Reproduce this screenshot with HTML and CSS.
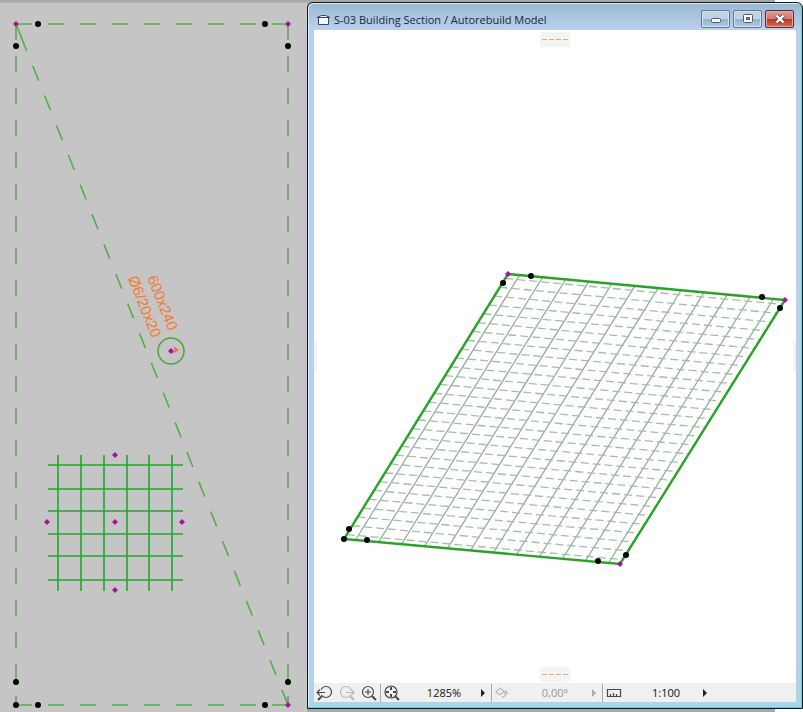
FILE: index.html
```html
<!DOCTYPE html>
<html lang="en">
<head>
<meta charset="utf-8">
<title>S-03 Building Section</title>
<link rel="stylesheet" href="styles.css">
</head>
<body>
<main class="workspace">
  <section class="plan" aria-label="Floor plan">
    <svg class="drawing" viewBox="0 0 307 709" preserveAspectRatio="xMinYMin meet">
      <g id="outline" class="outline"></g>
      <g id="swatch" class="swatch"></g>
      <circle class="ring" cx="171" cy="348" r="13"/>
      <path class="pointer" d="M173 343L179 347L172 351L175 347Z"/>
      <g class="label" transform="translate(147 275) rotate(68)">
        <text x="0" y="0">600x240</text>
        <text x="-7" y="18">Ø6/20x20</text>
      </g>
      <g id="plan-marks"></g>
    </svg>
  </section>
  <section class="window" aria-label="Section window">
    <header class="titlebar">
      <svg class="title-icon" viewBox="0 0 15 13"><path d="M2.500 4.500V11.500H12.500V4.500M1 4.500H14L9.500 2.500H5.500L1 4.500" fill="#f4f8fc" stroke="#34475e"/></svg>
      <h1 class="title">S-03 Building Section / Autorebuild Model</h1>
      <button class="winbtn" aria-label="Minimize"><svg viewBox="0 0 14 12"><rect x="2.500" y="5.500" width="9" height="4" rx="1" fill="#fff" stroke="#4c5b6c"/></svg></button>
      <button class="winbtn" aria-label="Maximize"><svg viewBox="0 0 14 12"><rect x="2.500" y="1.500" width="9" height="8" rx="1" fill="#fff" stroke="#4c5b6c"/><rect x="5.500" y="4.500" width="3" height="2" fill="#89a5c1" stroke="#4c5b6c"/></svg></button>
      <button class="winbtn close" aria-label="Close"><svg viewBox="0 0 14 12"><path d="M3.500 2.500L10.500 9.500M10.500 2.500L3.500 9.500" stroke="#6a4543" stroke-width="4"/><path d="M3.500 2.500L10.500 9.500M10.500 2.500L3.500 9.500" stroke="#fff" stroke-width="2.400"/></svg></button>
    </header>
    <div class="view">
      <svg class="model" viewBox="314 30 482 653" preserveAspectRatio="xMidYMid meet">
        <g id="mesh"></g>
        <path class="mesh-edge" d="M508 274L785 300L620 564L344 539Z"/>
        <g id="model-marks"></g>
      </svg>
      <span class="hint top"><i></i><i></i><i></i><i></i></span>
      <span class="hint bottom"><i></i><i></i><i></i><i></i></span>
      <span class="tab left"></span>
      <span class="tab right"></span>
    </div>
    <footer class="statusbar">
      <button class="tool" aria-label="Previous zoom"><svg viewBox="0 0 18 16"><circle cx="10" cy="7" r="5.500"/><path d="M6 11L2 15" stroke-width="2"/><path d="M2 7.500H9M5 4.500L2 7.500L5 10.500" stroke="#f0f0f0" stroke-width="3"/><path d="M1 7.500H9M4 4.500L1 7.500L4 10.500"/></svg></button>
      <button class="tool off" aria-label="Next zoom"><svg viewBox="0 0 18 16"><circle cx="8" cy="7" r="5.500"/><path d="M12 11L16 15" stroke-width="2"/><path d="M9 7.500H15M13 4.500L16 7.500L13 10.500" stroke="#f0f0f0" stroke-width="3"/><path d="M8 7.500H16M13 4.500L16 7.500L13 10.500"/></svg></button>
      <button class="tool" aria-label="Increase zoom"><svg viewBox="0 0 18 16"><circle cx="8" cy="7" r="5.500"/><path d="M12 11L16 15" stroke-width="2"/><path d="M5 7H11M8 4V10"/></svg></button>
      <i class="divider"></i>
      <button class="tool" aria-label="Fit in window"><svg viewBox="0 0 18 16"><circle cx="8" cy="7" r="6"/><path d="M12 11L16 15" stroke-width="2"/><path d="M8 2V5M8 9V12M3 7H6M10 7H13" stroke-width="2"/></svg></button>
      <span class="value">1285%</span>
      <button class="arrow" aria-label="Zoom options"><svg viewBox="0 0 6 8"><path d="M1 0L5 4L1 8Z"/></svg></button>
      <i class="divider"></i>
      <button class="tool off" aria-label="Orientation"><svg viewBox="0 0 18 16"><path d="M2 7L6 3L10 6L6 10ZM8 12Q12 12 12 7M10 9L12 6L14 9"/></svg></button>
      <span class="value off">0,00°</span>
      <button class="arrow off" aria-label="Orientation options"><svg viewBox="0 0 6 8"><path d="M1 0L5 4L1 8Z"/></svg></button>
      <i class="divider"></i>
      <button class="tool" aria-label="Scale"><svg viewBox="0 0 18 16"><path d="M2.500 4.500H15.500V11.500H2.500ZM5.500 11V9M8.500 11V8M11.500 11V9"/></svg></button>
      <span class="value">1:100</span>
      <button class="arrow" aria-label="Scale options"><svg viewBox="0 0 6 8"><path d="M1 0L5 4L1 8Z"/></svg></button>
    </footer>
  </section>
</main>
<script src="drawing.js"></script>
</body>
</html>
```
FILE: styles.css
```css
* { box-sizing: border-box; }
body {
  margin: 0;
  font-family: "Open Sans", "Noto Sans", sans-serif;
  font-size: 10px;
  background: linear-gradient(to left, #fff 28px, #a8a8a8 28px);
}
.workspace {
  display: grid;
  grid-template-columns: minmax(0, 307fr) minmax(0, 496fr);
  grid-template-rows: minmax(0, 1fr);
  height: 100vh;
  padding-top: 2px;
}
.plan { background: #c5c5c5; border-top: 1px solid #b5b5b5; overflow: hidden; }
.drawing, .model { display: block; width: 100%; height: 100%; }
.outline { stroke: #55ad4e; stroke-width: 1.6; fill: none; }
.swatch { stroke: #20a62a; stroke-width: 1.6; }
.ring { fill: none; stroke: #58a143; stroke-width: 1.6; }
.pointer { fill: #f36b32; }
.label { fill: #f47b32; font-size: 15px; font-family: "Liberation Sans", sans-serif; }
.dot { fill: #000; }
.diamond { fill: #a1169d; }
.window {
  display: flex;
  flex-direction: column;
  margin-bottom: 3px;
  padding: 0 6px 6px;
  border: 1px solid #101820;
  border-radius: 6px 6px 0 0;
  background: linear-gradient(#9ab7d3, #b9d1ea 26px, #b9d1ea 94%, #a9d6e9);
  box-shadow: inset -1px -1px #62cdd9, inset 1px 1px #dcebf7;
}
.titlebar { display: flex; align-items: flex-start; gap: 3px; height: 27px; padding: 7px 2px 0 2px; }
.title-icon { width: 15px; height: 13px; margin-top: 3px; }
.title { flex: 1; margin: 0; font-size: 11px; line-height: 20px; font-weight: 400; color: #17283c; white-space: nowrap; }
.winbtn {
  display: grid;
  place-items: center;
  width: 29px;
  height: 18px;
  padding: 0;
  border: 1px solid #62788f;
  border-radius: 2px;
  background: linear-gradient(#bed2e6 50%, #93b0ce 50%, #b4cce4);
  box-shadow: inset 0 0 0 1px #d3e2ef;
}
.winbtn svg { width: 14px; height: 12px; }
.close { border-color: #5d2929; background: linear-gradient(#dda196, #ce7868 50%, #b83322 50%, #d27056); box-shadow: inset 0 0 0 1px #e4a99e; }
.view { position: relative; flex: 1; min-height: 0; background: #fff; }
.mesh-edge { fill: none; stroke: #27a327; stroke-width: 2.4; }
.mesh-long { stroke: #8eaa96; stroke-width: 1.2; }
.mesh-cross { stroke: #a4bda8; stroke-width: 1.3; stroke-dasharray: 8 4; }
.hint {
  position: absolute;
  left: calc(50% - 15px);
  display: flex;
  align-items: center;
  justify-content: center;
  gap: 2px;
  width: 30px;
  height: 15px;
  border-radius: 2px;
  background: #f4f4f3;
}
.hint i { width: 5px; height: 1px; background: #f2a774; }
.top { top: 2px; }
.bottom { bottom: 1px; }
.tab { position: absolute; top: calc(50% - 15px); width: 3px; height: 30px; background: #f4f4f4; }
.left { left: 0; }
.right { right: 0; }
.statusbar { display: flex; align-items: center; height: 19px; background: #f0f0f0; color: #111; }
.tool, .arrow { display: grid; place-items: center; padding: 0; border: 0; background: none; }
.tool { width: 22px; height: 18px; }
.tool svg { width: 18px; height: 16px; fill: none; stroke: #484848; stroke-width: 1.2; }
.off svg { stroke: #b8b8b8; }
.arrow { width: 16px; height: 18px; }
.arrow svg { width: 6px; height: 8px; fill: #222; stroke: none; }
.arrow.off svg { fill: #aaa; }
.value { width: 72px; padding-left: 10px; font-size: 11px; line-height: 18px; text-align: center; }
.value.off { color: #999; }
.divider { width: 1px; height: 18px; background: #aaa; }
```
FILE: drawing.js
```js
const NS = 'http://www.w3.org/2000/svg';

function add(parent, tag, attrs) {
  const node = document.createElementNS(NS, tag);
  for (const key in attrs) node.setAttribute(key, attrs[key]);
  document.getElementById(parent).appendChild(node);
}

function line(parent, x1, y1, x2, y2, extra) {
  add(parent, 'line', Object.assign({ x1, y1, x2, y2 }, extra));
}

function dots(parent, points) {
  points.forEach(([cx, cy]) => add(parent, 'circle', { cx, cy, r: 3, class: 'dot' }));
}

function diamonds(parent, points) {
  points.forEach(([x, y]) => add(parent, 'path', {
    d: `M${x - 3} ${y}L${x} ${y - 3}L${x + 3} ${y}L${x} ${y + 3}Z`, class: 'diamond'
  }));
}

// Plan: dashed boundary and diagonal of the reinforcement field
const dash = { 'stroke-dasharray': '16 16' };
line('outline', 16, 21, 288, 21, dash);
line('outline', 16, 21, 16, 702, dash);
line('outline', 288, 21, 288, 702, dash);
line('outline', 16, 702, 288, 702, dash);
line('outline', 16, 21, 288, 702, { 'stroke-dasharray': '16 16', 'stroke-dashoffset': -13 });
line('outline', 16, 21, 22, 36);

[58, 81, 104, 127, 149, 172].forEach(x => line('swatch', x, 452, x, 588));
[462, 486, 508, 531, 553, 577].forEach(y => line('swatch', 48, y, 183, y));

dots('plan-marks', [[38, 21], [265, 21], [16, 43], [288, 43], [16, 679], [288, 679], [16, 702], [38, 702], [265, 702]]);
diamonds('plan-marks', [[16, 21], [288, 21], [288, 702], [171, 348], [115, 452], [47, 519], [115, 519], [182, 519], [115, 587]]);

// Model: sheared bar mesh, 12 long bars by 30 cross bars
for (let i = 0; i < 12; i++) {
  const t = (i + 0.5) / 12;
  line('mesh', 508 + 277 * t, 274 + 26 * t, 344 + 276 * t, 539 + 25 * t, { class: 'mesh-long' });
}
for (let i = 0; i < 30; i++) {
  const t = (i + 0.5) / 30;
  line('mesh', 508 - 164 * t, 274 + 265 * t, 785 - 165 * t, 300 + 264 * t, { class: 'mesh-cross' });
}
dots('model-marks', [[503, 283], [531, 276], [762, 297], [780, 308], [349, 529], [344, 539], [367, 540], [598, 561], [626, 555]]);
diamonds('model-marks', [[508, 274], [785, 300], [620, 564]]);
```
